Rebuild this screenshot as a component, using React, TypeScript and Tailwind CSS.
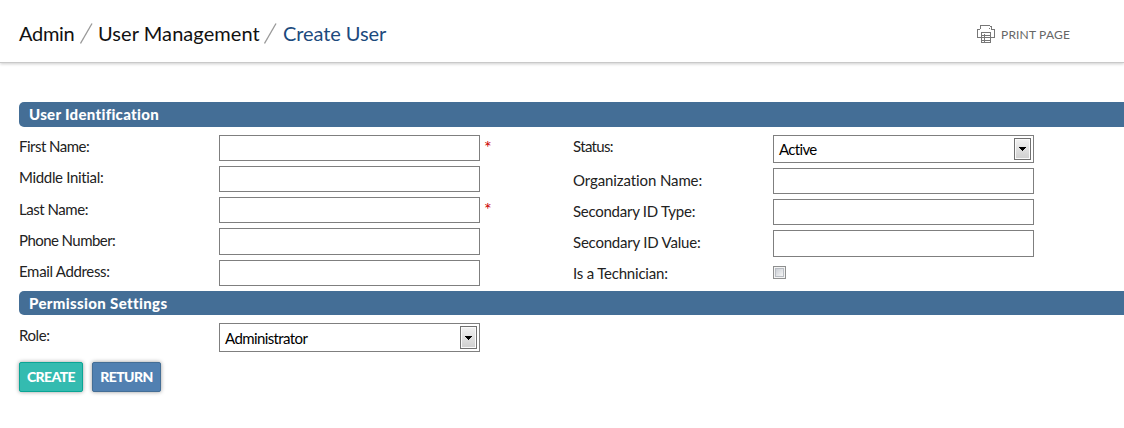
import React from "react";

const LEFT = [
  { label: "First Name:", required: true, row: "h-[31px]", box: "h-[26px]", ls: "tracking-[-0.52px]", pad: "pt-px" },
  { label: "Middle Initial:", required: false, row: "h-[31px]", box: "h-[26px]", ls: "tracking-[-0.33px]", pad: "pt-px" },
  { label: "Last Name:", required: true, row: "h-[31px]", box: "h-[26px]", ls: "tracking-[-0.46px]", pad: "pt-[2px]" },
  { label: "Phone Number:", required: false, row: "h-[32px]", box: "h-[27px]", ls: "tracking-[-0.56px]", pad: "pt-[2px]" },
  { label: "Email Address:", required: false, row: "h-[31px]", box: "h-[26px]", ls: "tracking-[-0.33px]", pad: "pt-px" },
];

const RIGHT = [
  { label: "Organization Name:", row: "h-[31px]", box: "h-[26px]", ls: "tracking-[-0.1px]" },
  { label: "Secondary ID Type:", row: "h-[31px]", box: "h-[26px]", ls: "tracking-[-0.26px]" },
  { label: "Secondary ID Value:", row: "h-[32px]", box: "h-[27px]", ls: "tracking-[-0.21px]" },
];

function Label({ text, ls, pad }: { text: string; ls: string; pad: string }) {
  return (
    <div className={`w-[200px] shrink-0 leading-[20px] ${pad}`}>
      <span className={`whitespace-nowrap ${ls}`}>{text}</span>
    </div>
  );
}

function Select({ value, height, ls }: { value: string; height: string; ls: string }) {
  return (
    <div className={`flex w-[261px] items-stretch justify-between border border-[#7f7f7f] bg-white p-[2px] ${height}`}>
      <span className={`self-center pl-[3px] leading-[20px] text-black ${ls}`}>{value}</span>
      <span className="flex w-[17px] items-center justify-center border border-[#707070] bg-linear-to-b from-[#f2f2f2] to-[#cfcfcf] shadow-[inset_0_0_0_1px_#fafafa]">
        <svg width="7" height="4" viewBox="0 0 7 4" shapeRendering="crispEdges">
          <path d="M0 0h7v1h-1v1h-1v1h-1v1h-1v-1h-1v-1h-1v-1h-1z" fill="#000" />
        </svg>
      </span>
    </div>
  );
}

function PrinterIcon() {
  return (
    <svg width="18" height="18" viewBox="0 0 18 18" fill="none" stroke="#777" shapeRendering="crispEdges">
      <path d="M3.5 4V.5h9M14.5 2v2.500M12.500 1.500h2M3 4.500H.5v8H4M14 4.500h3.500v8H14M12 3.500h1" />
      <path d="M4.5 7.500h9v10h-9zM4.500 10.500h9M4.500 12.500h9M4.500 15.500h9M7.500 9v8" />
    </svg>
  );
}

function Slash() {
  return (
    <svg width="13" height="21" viewBox="0 0 13 21" stroke="#999" strokeWidth="1.3">
      <path d="M.5 20.5L12 .5" />
    </svg>
  );
}

export default function App() {
  return (
    <div className="h-[428px] w-[1124px] overflow-hidden bg-white font-['Lato',sans-serif] text-[15px] text-[#222]">
      <header className="flex h-[63px] items-center justify-between border-b border-[#c9c9c9] pr-[54px] pl-[19px] shadow-[0_1px_3px_rgba(0,0,0,0.2)]">
        <nav className="flex items-center pt-[4px] text-[20px] leading-[28px] text-[#111]">
          <span className="w-[61px] pb-px tracking-[-0.3px] whitespace-nowrap">Admin</span>
          <Slash />
          <span className="w-[171px] pb-px pl-[5px] tracking-[0.07px] whitespace-nowrap">User Management</span>
          <Slash />
          <span className="pb-px pl-[6px] tracking-[-0.08px] whitespace-nowrap text-[#1c4a7d]">Create User</span>
        </nav>
        <div className="flex items-center gap-[6px] pt-[5px] text-[12px] text-[#666]">
          <PrinterIcon />
          <span className="w-[69px] pt-[2px] tracking-[0.18px] whitespace-nowrap">PRINT PAGE</span>
        </div>
      </header>

      <main className="pt-[39px] pl-[19px]">
        <h2 className="h-[25px] rounded-l-[5px] bg-[#446e96] pl-[10px] leading-[25px] font-black tracking-[0.3px] text-white">User Identification</h2>
        <div className="flex h-[164px] pt-[8px]">
          <div className="w-[554px]">
            {LEFT.map((f) => (
              <div key={f.label} className={`flex ${f.row}`}>
                <Label text={f.label} ls={f.ls} pad={f.pad} />
                <div className={`w-[261px] border border-[#7f7f7f] ${f.box}`} />
                {f.required && <span className="pl-[4px] text-[18px] leading-[25px] text-[#c00]">*</span>}
              </div>
            ))}
          </div>
          <div>
            <div className="flex h-[33px]">
              <Label text="Status:" ls="tracking-[-0.65px]" pad="pt-px" />
              <Select value="Active" height="h-[28px]" ls="tracking-[-0.65px]" />
            </div>
            {RIGHT.map((f) => (
              <div key={f.label} className={`flex ${f.row}`}>
                <Label text={f.label} ls={f.ls} pad="pt-[2px]" />
                <div className={`w-[261px] border border-[#7f7f7f] ${f.box}`} />
              </div>
            ))}
            <div className="flex">
              <Label text="Is a Technician:" ls="tracking-[-0.2px]" pad="pt-px" />
              <div className="mt-[4px] h-[13px] w-[13px] border border-[#8e8f8f] bg-[#f4f4f4] p-px">
                <div className="h-[9px] w-[9px] border border-[#b9bdc3] bg-linear-to-br from-[#cbcfd5] to-[#f6f6f6]" />
              </div>
            </div>
          </div>
        </div>
        <h2 className="h-[24px] rounded-l-[5px] bg-[#446e96] pl-[10px] leading-[24px] font-black tracking-[0.35px] text-white">Permission Settings</h2>
        <div className="flex h-[47px] pt-[8px]">
          <Label text="Role:" ls="tracking-[-0.4px]" pad="pt-[2px]" />
          <Select value="Administrator" height="h-[29px]" ls="tracking-[-0.6px]" />
        </div>
        <div className="flex gap-[9px] text-[14px] font-black tracking-[-0.6px] text-white">
          <button className="h-[30px] w-[64px] rounded-[2px] border border-[#0aa595] bg-[#34bbb0] pb-px shadow-[0_0_4px_rgba(0,0,0,0.4)]">CREATE</button>
          <button className="h-[30px] w-[69px] rounded-[2px] border border-[#446e96] bg-[#5180b1] pb-px shadow-[0_0_4px_rgba(0,0,0,0.4)]">RETURN</button>
        </div>
      </main>
    </div>
  );
}
